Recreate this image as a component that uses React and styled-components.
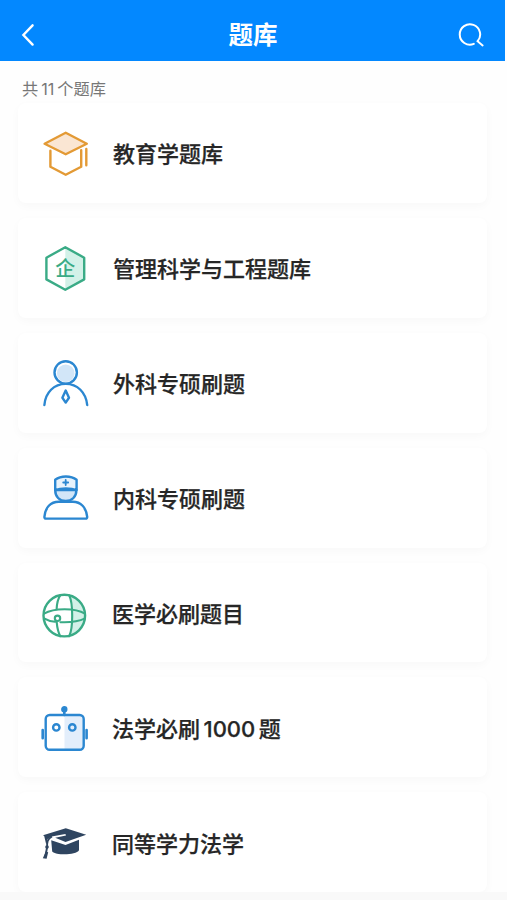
import React from 'react';
import styled, { createGlobalStyle } from 'styled-components';

const ORANGE = '#e39a35';
const GREEN = '#3aab86';
const BLUE = '#2b87d1';
const NAVY = '#2f4560';

const CapOutlineIcon = () => (
  <Icon stroke={ORANGE}>
    <path d="M25.7 4.8 46.8 15.7 25.7 26.2 4.6 15.7Z" fill="#fae6d3" />
    <path d="M10.4 22.8V38.8L25.7 46.8 41.2 38.8V22.2M46.3 21V37.3" />
  </Icon>
);

const HexagonIcon = () => (
  <Icon stroke={GREEN}>
    <path d="M25.3 4.2 44.2 14.7V36.4L25.3 46.8Z" fill="#d3f1e8" stroke="none" />
    <path d="M25.3 4.2 44.2 14.7V36.4L25.3 46.8 6.4 36.4V14.7Z" />
    <Glyph x="25.3" y="32.8">
      企
    </Glyph>
  </Icon>
);

const PersonIcon = () => (
  <Icon stroke={BLUE}>
    <circle cx="25.7" cy="14.4" r="11.2" />
    <circle cx="25.7" cy="15.2" r="8.8" fill="#d2e6f8" stroke="none" />
    <path d="M4.4 47C5.4 34.5 14 25.9 25.7 25.9S46 34.5 47.2 47" />
    <path d="M25.7 32.5 29 39.8 25.7 44.6 22.4 39.8Z" />
  </Icon>
);

const DoctorIcon = () => (
  <Icon stroke={BLUE}>
    <path d="M15.2 17H36.4C36.4 23.8 32 27.9 25.7 27.9S15.2 23.8 15.2 17Z" fill="#d2e6f8" />
    <path d="M15.2 17V6.8C20.8 2.4 31 2.4 36.6 6.8V17C31 14.8 20.8 14.8 15.2 17Z" fill="#e8f3fc" />
    <path d="M25.7 7V12M23.2 9.5H28.2" strokeWidth="1.8" />
    <path d="M18.8 28.7C10.6 28.7 5.2 34.5 4.4 43.8Q4.3 45.6 6 45.6H45.6Q47.3 45.6 47.2 43.8C46.2 34.5 40.8 28.7 32.8 28.7Z" />
  </Icon>
);

const GlobeIcon = () => (
  <Icon stroke={GREEN}>
    <path d="M31 8.2A21 21 0 0 1 31 47.6Z" fill="#d3f1e8" stroke="none" />
    <g strokeWidth="2.1">
      <circle cx="24.3" cy="27.6" r="20.8" strokeWidth="2.4" />
      <path d="M20.3 7.4C17.6 11 16.9 15.4 16.6 21.3M29.2 7.4C33.2 15.4 33.2 40 29.2 48.2M16.7 34.1C17.2 40 18.2 44.4 20.3 48.2" />
      <path d="M4 25.6C14 19.7 35.3 19.7 45 25.6M4 30.4C7.6 32.5 11 33.5 15 33.8M20.5 34.2C30 34.6 39.7 33 45 30.4" />
      <circle cx="17.5" cy="30.3" r="2.7" />
    </g>
  </Icon>
);

const RobotIcon = () => (
  <Icon stroke={BLUE}>
    <path d="M24.5 13H40Q43.8 13 43.8 17V43.6Q43.8 47.6 40 47.6H24.5Z" fill="#e3eefb" stroke="none" />
    <rect x="5.7" y="13" width="38" height="34.8" rx="4" />
    <circle cx="16.3" cy="25.4" r="3.2" />
    <circle cx="32.3" cy="25.4" r="3.2" />
    <circle cx="24.3" cy="7.2" r="2" fill={BLUE} />
    <path d="M24.3 9V13M2.7 28V36.2M46.6 28V36.2" strokeWidth="2.6" />
  </Icon>
);

const CapSolidIcon = () => (
  <Icon stroke="none" viewBox="0 -1 50 50">
    <path
      d="M25.8 10.2 46.2 16.7 25.5 24 15.2 19.7 26 17.4 25.4 15.9 11.6 18.5 7.6 21 6.4 27.2 4.2 18 3 17.2Z"
      fill={NAVY}
    />
    <path d="M11.2 22.2 25.5 27 39 21.8V32.3C36.4 37.2 16.2 37.8 12.2 33.4Z" fill={NAVY} />
    <path
      d="M12 18.5C7.2 21 7 24.5 7.1 29.3L5.2 39.2"
      stroke={NAVY}
      strokeWidth="1.9"
      strokeLinecap="butt"
    />
    <path d="M5.8 33.6 8.2 34.2 6.6 40.8 2.8 40.2Z" fill={NAVY} />
    <circle cx="7" cy="29" r="1.8" fill={NAVY} />
  </Icon>
);

const banks = [
  { title: '教育学题库', icon: CapOutlineIcon },
  { title: '管理科学与工程题库', icon: HexagonIcon },
  { title: '外科专硕刷题', icon: PersonIcon },
  { title: '内科专硕刷题', icon: DoctorIcon },
  { title: '医学必刷题目', icon: GlobeIcon, gap: 22 },
  { title: ['法学必刷', '1000', '题'], icon: RobotIcon, gap: 22, lift: 0 },
  { title: '同等学力法学', icon: CapSolidIcon, gap: 22, lift: 0 },
];

const App = () => (
  <>
    <GlobalStyle />
    <Page>
      <Header>
        <HeaderButton aria-label="返回">
          <svg width="14" height="24" viewBox="0 0 14 24">
            <path d="M11.6 2.3 2.4 12 11.6 21.6" />
          </svg>
        </HeaderButton>
        <Title>题库</Title>
        <HeaderButton aria-label="搜索">
          <svg width="28" height="26" viewBox="0 0 28 26">
            <path
              d="M16.8 21.9A10.2 10.2 0 1 1 20.6 19.2L25.6 23.4"
              strokeWidth="2"
            />
          </svg>
        </HeaderButton>
      </Header>
      <Count>
        共<Digits $gap={3}>11</Digits>个题库
      </Count>
      <List>
        {banks.map(({ title, icon: BankIcon, gap = 23, lift = 2 }) => (
          <Card key={title}>
            <BankIcon />
            <Name $gap={gap} $lift={lift}>
              {Array.isArray(title) ? (
                <>
                  {title[0]}
                  <Digits $gap={3.5}>{title[1]}</Digits>
                  {title[2]}
                </>
              ) : (
                title
              )}
            </Name>
          </Card>
        ))}
      </List>
      <Footer />
    </Page>
  </>
);

const GlobalStyle = createGlobalStyle`
  * {
    box-sizing: border-box;
  }
  body {
    margin: 0;
    background-color: #fefefe;
    font-family: 'Noto Sans CJK SC', sans-serif;
  }
`;

const Page = styled.div`
  display: flex;
  flex-direction: column;
  height: 900px;
  overflow: hidden;
`;

const Header = styled.header`
  display: flex;
  flex: none;
  align-items: center;
  justify-content: space-between;
  width: 505px;
  height: 61px;
  padding: 9px 20px 0 21px;
  background-color: #0388ff;
`;

const HeaderButton = styled.button`
  display: flex;
  padding: 0;
  border: none;
  background: none;
  svg {
    fill: none;
    stroke: white;
    stroke-width: 2.4;
    stroke-linecap: round;
  }
`;

const Title = styled.h1`
  margin: 0 0 2px 14px;
  color: white;
  font-size: 24.5px;
  font-weight: 700;
  line-height: 36px;
`;

const Count = styled.p`
  flex: none;
  height: 42px;
  margin: 0;
  padding: 15px 22px 0;
  color: #777;
  font-size: 16.2px;
  line-height: 24px;
`;

const Digits = styled.span`
  margin: 0 ${props => props.$gap}px;
  font-family: Inter, sans-serif;
  line-height: 1;
`;

const List = styled.div`
  display: flex;
  flex: none;
  flex-direction: column;
  gap: 15px;
  height: 789px;
  padding: 0 20px 0 18px;
`;

const Card = styled.div`
  display: flex;
  flex: none;
  align-items: center;
  height: 99.9px;
  padding-left: 22px;
  border-radius: 8px;
  background-color: white;
  box-shadow: 0 3px 10px rgba(0, 0, 0, 0.028);
`;

const Icon = styled.svg.attrs(props => ({
  viewBox: props.viewBox || '0 0 50 50',
}))`
  flex: none;
  width: 50px;
  height: 50px;
  fill: none;
  stroke-width: 2.4;
  stroke-linecap: round;
  stroke-linejoin: round;
`;

const Glyph = styled.text`
  fill: ${GREEN};
  stroke: none;
  font-size: 20px;
  font-weight: 500;
  text-anchor: middle;
`;

const Name = styled.span`
  margin: 0 0 ${props => props.$lift}px ${props => props.$gap}px;
  color: #262626;
  font-size: 22px;
  font-weight: 500;
  line-height: 32px;
  -webkit-text-stroke: 0.25px #262626;
`;

const Footer = styled.div`
  flex: 1;
  background-color: #f9f9f9;
`;

export default App;
